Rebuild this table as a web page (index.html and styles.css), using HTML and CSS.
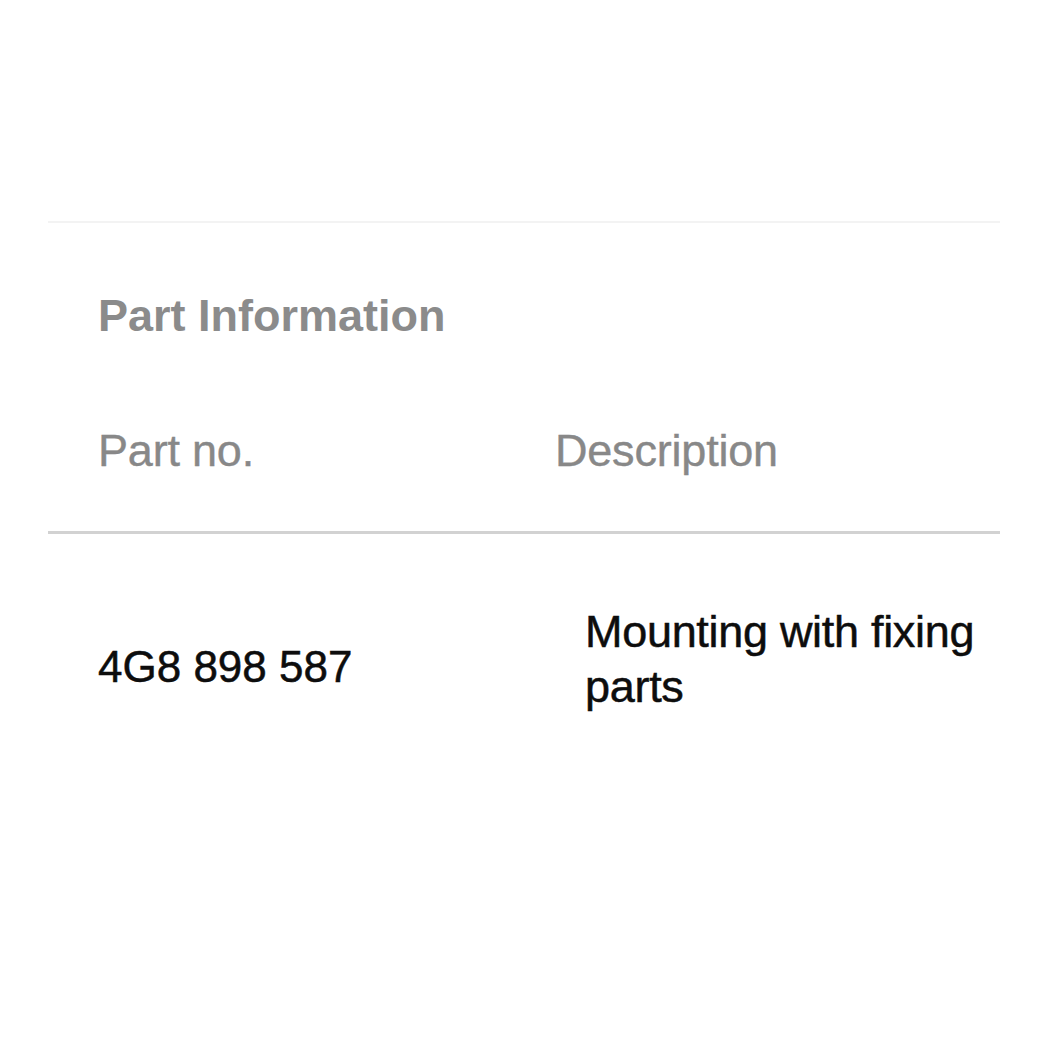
FILE: index.html
```html
<!DOCTYPE html>
<html lang="en">
<head>
<meta charset="utf-8">
<title>Part Information</title>
<link rel="stylesheet" href="styles.css">
</head>
<body>
<section class="panel">
  <h2 class="panel-title">Part Information</h2>
  <table class="parts">
    <colgroup>
      <col class="col-no">
      <col class="col-desc">
    </colgroup>
    <thead>
      <tr>
        <th class="head-no">Part no.</th>
        <th class="head-desc">Description</th>
      </tr>
    </thead>
    <tbody>
      <tr>
        <td class="cell-no">4G8 898 587</td>
        <td class="cell-desc">Mounting with fixing parts</td>
      </tr>
    </tbody>
  </table>
</section>
</body>
</html>
```

FILE: styles.css
```css
html, body {
  margin: 0;
  padding: 0;
  background: #ffffff;
}

body {
  font-family: "Liberation Sans", Arial, sans-serif;
}

.panel {
  margin: 221px 50px 0 48px;
  border-top: 2px solid #f3f3f3;
}

.panel-title {
  margin: 66px 0 0 50px;
  font-size: 45px;
  line-height: 54px;
  font-weight: bold;
  color: #8b8b8b;
}

.parts {
  width: 100%;
  table-layout: fixed;
  border-collapse: collapse;
  margin-top: 82px;
}

.col-no {
  width: 507px;
}

.parts th {
  text-align: left;
  font-weight: normal;
  font-size: 45px;
  line-height: 52px;
  color: #888888;
  padding: 0 0 54px 0;
  border-bottom: 3px solid #d2d2d2;
  letter-spacing: -0.2px;
  -webkit-text-stroke: 0.4px currentColor;
}

.parts th.head-no {
  padding-left: 50px;
}

.parts td {
  vertical-align: middle;
  color: #0d0d0d;
  -webkit-text-stroke: 0.5px currentColor;
}

.cell-no {
  padding: 84px 0 0 50px;
  font-size: 44px;
  line-height: 55px;
  letter-spacing: 0;
}

.cell-desc {
  padding: 70px 10px 0 30px;
  font-size: 45px;
  line-height: 55px;
  letter-spacing: -0.3px;
}
```
